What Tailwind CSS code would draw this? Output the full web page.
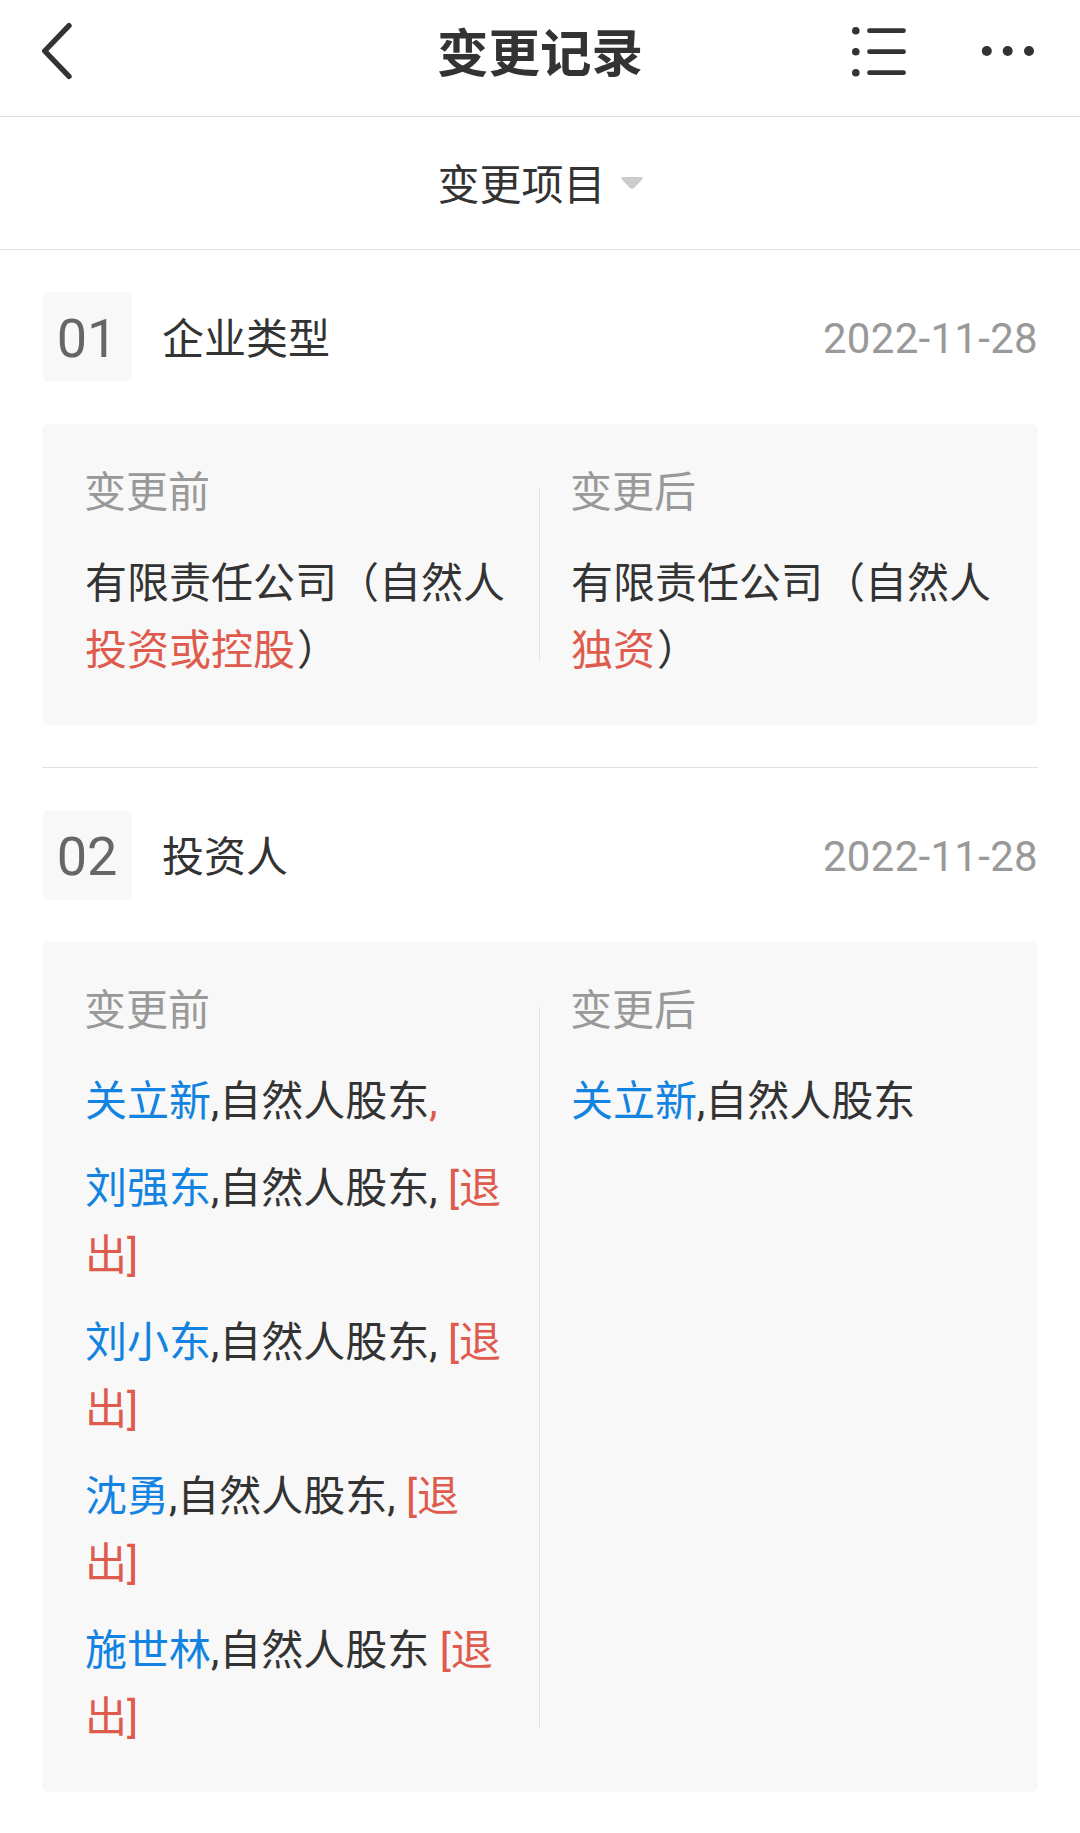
<!DOCTYPE html>
<html lang="zh-CN">
<head>
<meta charset="utf-8">
<title>变更记录</title>
<script src="https://cdn.jsdelivr.net/npm/@tailwindcss/browser@4"></script>
</head>
<body class="bg-white text-[#333] font-['Roboto','Noto_Sans_CJK_SC',sans-serif] text-[42px] leading-[67px] h-[1833px] overflow-hidden">
<header class="flex items-start justify-between h-[117px] border-b border-[#e0e0e0] px-[42px]">
  <svg class="w-[196px] h-[116px]" viewBox="42 0 196 116" fill="none" stroke="#333" stroke-width="5.4" stroke-linecap="round" stroke-linejoin="round"><path d="M69 25.7L44.7 51L69 76.4"/></svg>
  <h1 class="text-[51.5px] font-bold leading-[109px]">变更记录</h1>
  <svg class="w-[196px] h-[116px]" viewBox="842 0 196 116" fill="#333" stroke="none">
    <circle cx="855.8" cy="30.7" r="3.8"/><circle cx="855.8" cy="51.7" r="3.8"/><circle cx="855.8" cy="72.7" r="3.8"/>
    <path d="M869.5 30.7H903.5M869.5 51.7H903.5M869.5 72.7H903.5" stroke="#333" stroke-width="4.8" stroke-linecap="round"/>
    <circle cx="986.8" cy="51" r="5"/><circle cx="1007.7" cy="51" r="5"/><circle cx="1029" cy="51" r="5"/>
  </svg>
</header>
<div class="flex items-center justify-center gap-[15px] h-[133px] border-b border-[#e0e0e0]">
  <span class="pt-[4px]">变更项目</span>
  <svg class="w-[22px] h-[12px] mb-[1px]" viewBox="0 0 22 12" fill="#ccc"><path d="M1.5 0H20.5Q22.5 .8 21.2 2.4L13.4 10.8Q11 13 8.6 10.8L.8 2.4Q-.5 .8 1.5 0Z"/></svg>
</div>
<main class="px-[42px]">
  <section class="pt-[42px]">
    <div class="flex items-center h-[90px]">
      <div class="w-[90px] h-[90px] rounded-[6px] bg-[#f8f8f8] text-[#666] text-[54px] pt-[2px] flex items-center justify-center">01</div>
      <h2 class="ml-[30px] pt-[4px]">企业类型</h2>
      <time class="ml-auto pt-[2px] text-[#999] tracking-[0.3px]">2022-11-28</time>
    </div>
    <div class="mt-[42px] h-[301px] rounded-[6px] bg-[#f8f8f8] p-[42px] flex">
      <div class="w-[455px] pt-[2px]">
        <div class="text-[#999] leading-[50px] mb-[32px]">变更前</div>
        <p class="pl-px">有限责任公司（自然人<br><span class="text-[#de5b4d] mr-[2px]">投资或控股</span>）</p>
      </div>
      <div class="w-px my-[22px] bg-[#e0e0e0]"></div>
      <div class="pl-[30px] pt-[2px]">
        <div class="text-[#999] leading-[50px] mb-[32px]">变更后</div>
        <p class="pl-px">有限责任公司（自然人<br><span class="text-[#de5b4d] mr-[2px]">独资</span>）</p>
      </div>
    </div>
  </section>
  <section class="mt-[42px] pt-[42px] border-t border-[#e0e0e0]">
    <div class="flex items-center h-[90px]">
      <div class="w-[90px] h-[90px] rounded-[6px] bg-[#f8f8f8] text-[#666] text-[54px] pt-[2px] flex items-center justify-center">02</div>
      <h2 class="ml-[30px] pt-[4px]">投资人</h2>
      <time class="ml-auto pt-[2px] text-[#999] tracking-[0.3px]">2022-11-28</time>
    </div>
    <div class="mt-[42px] h-[850px] rounded-[6px] bg-[#f8f8f8] p-[42px] flex">
      <div class="w-[455px] pt-[2px]">
        <div class="text-[#999] leading-[50px] mb-[32px]">变更前</div>
        <div class="flex flex-col gap-[20px] pl-px">
          <p><span class="text-[#1283e0]">关立新</span>,自然人股东<span class="text-[#de5b4d]">,</span></p>
          <p><span class="text-[#1283e0]">刘强东</span>,自然人股东, <span class="text-[#de5b4d]">[退<br>出]</span></p>
          <p><span class="text-[#1283e0]">刘小东</span>,自然人股东, <span class="text-[#de5b4d]">[退<br>出]</span></p>
          <p><span class="text-[#1283e0]">沈勇</span>,自然人股东, <span class="text-[#de5b4d]">[退<br>出]</span></p>
          <p><span class="text-[#1283e0]">施世林</span>,自然人股东 <span class="text-[#de5b4d]">[退<br>出]</span></p>
        </div>
      </div>
      <div class="w-px my-[23px] bg-[#e0e0e0]"></div>
      <div class="pl-[30px] pt-[2px]">
        <div class="text-[#999] leading-[50px] mb-[32px]">变更后</div>
        <p class="pl-px"><span class="text-[#1283e0]">关立新</span>,自然人股东</p>
      </div>
    </div>
  </section>
</main>
</body>
</html>
